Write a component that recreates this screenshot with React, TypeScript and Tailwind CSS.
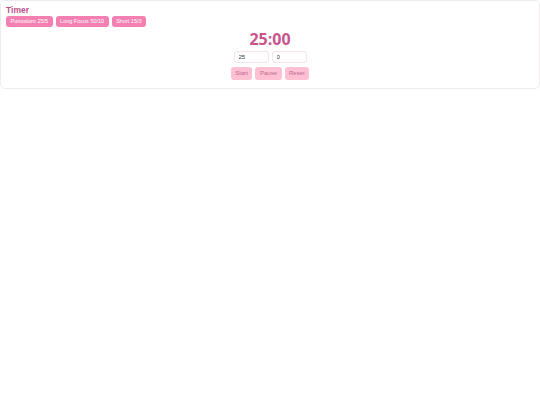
import { useState } from "react";

const presets = [
    { label: "Pomodoro 25/5", work: 25 },
    { label: "Long Focus 50/10", work: 50 },
    { label: "Short 15/3", work: 15 },
];

export default function App() {
    const [minutes, setMinutes] = useState("25");
    const [seconds, setSeconds] = useState("0");

    const mm = String(Number(minutes) || 0).padStart(2, "0");
    const ss = String(Number(seconds) || 0).padStart(2, "0");

    return (
        <div className="bg-white w-[540px] h-[405px] font-['Liberation_Sans',Arial,sans-serif]">
            <div className="border border-[#f1eaed] rounded-[5px] px-[5px] pt-[4px] pb-[8px] w-[540px]">
                <h1 className="font-bold text-[8.5px] leading-[11px] text-[#bd5087]">Timer</h1>
                <div className="flex gap-[3px]">
                    {presets.map((p) => (
                        <button
                            key={p.label}
                            onClick={() => {
                                setMinutes(String(p.work));
                                setSeconds("0");
                            }}
                            className="h-[11px] px-[4.5px] rounded-[3px] bg-[#f47fb1] text-white text-[5.5px] leading-[11px]"
                        >
                            {p.label}
                        </button>
                    ))}
                </div>

                <div className="flex flex-col items-center">
                    <div className="font-['Open_Sans',sans-serif] font-bold text-[16px] leading-[20px] text-[#c8558b] mt-[2px]">
                        {mm}:{ss}
                    </div>
                    <div className="flex gap-[3px] mt-[2px]">
                        <input
                            value={minutes}
                            onChange={(e) => setMinutes(e.target.value)}
                            className="w-[35px] h-[12px] border border-[#f4e3e9] rounded-[3px] px-[4px] text-[6px] text-[#333] outline-none"
                        />
                        <input
                            value={seconds}
                            onChange={(e) => setSeconds(e.target.value)}
                            className="w-[35px] h-[12px] border border-[#f4e3e9] rounded-[3px] px-[4px] text-[6px] text-[#333] outline-none"
                        />
                    </div>
                    <div className="flex gap-[3px] mt-[4px]">
                        {["Start", "Pause", "Reset"].map((b) => (
                            <button
                                key={b}
                                className="h-[12.5px] px-[4.5px] rounded-[3px] bg-[#ffc0d3] text-[#bd6a8c] text-[6px] leading-[12.5px]"
                            >
                                {b}
                            </button>
                        ))}
                    </div>
                </div>
            </div>
        </div>
    );
}
